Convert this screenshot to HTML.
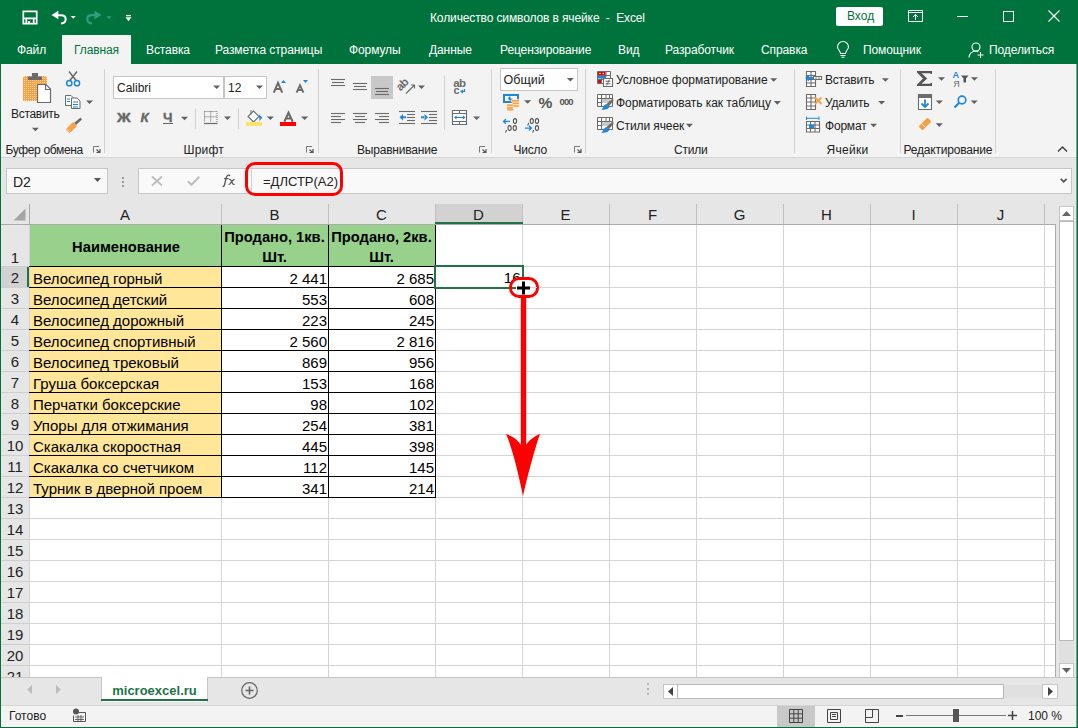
<!DOCTYPE html><html><head><meta charset="utf-8"><style>
html,body{margin:0;padding:0;}
body{width:1078px;height:728px;overflow:hidden;position:relative;background:#00733d;font-family:"Liberation Sans",sans-serif;}
div{box-sizing:border-box;}
svg{position:absolute;overflow:visible;}
</style></head><body>
<div style="position:absolute;left:430px;top:11px;font-size:12px;line-height:14px;color:#fff;font-weight:normal;white-space:nowrap;letter-spacing:-0.12px;">Количество символов в ячейке&nbsp; -&nbsp; Excel</div>
<svg style="left:22px;top:10px;" width="16" height="15" viewBox="0 0 16 15"><path d="M1.3 1.3H14.7V13.7H1.3Z M1.3 8.3H14.7 M4.3 8.3V13.7 M11.7 8.3V13.7" fill="none" stroke="#fff" stroke-width="1.7"/><path d="M6 11H8V13.5H6Z" fill="#fff"/></svg>
<svg style="left:0;top:0" width="140" height="33" viewBox="0 0 140 33"><path d="M56 15.2H61Q65.7 15.2 65.7 19.2Q65.7 23 61 23.5" fill="none" stroke="#fff" stroke-width="2"/><path d="M51.5 15L58.3 10.8V19.3Z" fill="#fff"/><path d="M96.5 15.2H92Q87.3 15.2 87.3 19.2Q87.3 23 92 23.5" fill="none" stroke="#2e9e7e" stroke-width="2.2"/><path d="M101.5 15L94.5 10.8V19.3Z" fill="#2e9e7e"/><path d="M70.8 16H75.8L73.3 18.8Z" fill="#fff"/><path d="M106.5 16.2H111.5L109 19Z" fill="#2e9e7e"/><path d="M126 15.6H131" stroke="#fff" stroke-width="1.3"/><path d="M125.5 17.3H131.5L128.5 21.3Z" fill="#fff"/></svg>
<div style="position:absolute;left:836px;top:7px;width:47px;height:19px;background:#fff;border-radius:2px;"></div>
<div style="position:absolute;left:847px;top:9px;font-size:12px;line-height:14px;color:#00733d;font-weight:normal;white-space:nowrap;">Вход</div>
<svg style="left:908px;top:10px;" width="15" height="12" viewBox="0 0 15 12"><path d="M0.5 0.5H14.5V11.5H0.5Z M0.5 2.5H14.5" fill="none" stroke="#fff" stroke-width="1"/><path d="M7.5 10V4.5 M5 7L7.5 4.5L10 7" fill="none" stroke="#fff" stroke-width="1"/></svg>
<div style="position:absolute;left:957px;top:16px;width:11px;height:1px;background:#fff;"></div>
<div style="position:absolute;left:1003px;top:11px;width:11px;height:11px;border:1px solid #fff;"></div>
<svg style="left:1048px;top:10px;" width="12" height="12" viewBox="0 0 12 12"><path d="M0.5 0.5L11.5 11.5M11.5 0.5L0.5 11.5" stroke="#fff" stroke-width="1.1"/></svg>
<div style="position:absolute;left:62px;top:35px;width:69px;height:30px;background:#f3f3f3;"></div>
<div style="position:absolute;left:17px;top:43px;font-size:12px;line-height:14px;color:#fff;font-weight:normal;white-space:nowrap;letter-spacing:-0.1px;">Файл</div>
<div style="position:absolute;left:74px;top:43px;font-size:12px;line-height:14px;color:#00733d;font-weight:normal;white-space:nowrap;letter-spacing:-0.1px;">Главная</div>
<div style="position:absolute;left:146px;top:43px;font-size:12px;line-height:14px;color:#fff;font-weight:normal;white-space:nowrap;letter-spacing:-0.1px;">Вставка</div>
<div style="position:absolute;left:215px;top:43px;font-size:12px;line-height:14px;color:#fff;font-weight:normal;white-space:nowrap;letter-spacing:-0.1px;">Разметка страницы</div>
<div style="position:absolute;left:349px;top:43px;font-size:12px;line-height:14px;color:#fff;font-weight:normal;white-space:nowrap;letter-spacing:-0.1px;">Формулы</div>
<div style="position:absolute;left:429px;top:43px;font-size:12px;line-height:14px;color:#fff;font-weight:normal;white-space:nowrap;letter-spacing:-0.1px;">Данные</div>
<div style="position:absolute;left:500px;top:43px;font-size:12px;line-height:14px;color:#fff;font-weight:normal;white-space:nowrap;letter-spacing:-0.1px;">Рецензирование</div>
<div style="position:absolute;left:618px;top:43px;font-size:12px;line-height:14px;color:#fff;font-weight:normal;white-space:nowrap;letter-spacing:-0.1px;">Вид</div>
<div style="position:absolute;left:665px;top:43px;font-size:12px;line-height:14px;color:#fff;font-weight:normal;white-space:nowrap;letter-spacing:-0.1px;">Разработчик</div>
<div style="position:absolute;left:761px;top:43px;font-size:12px;line-height:14px;color:#fff;font-weight:normal;white-space:nowrap;letter-spacing:-0.1px;">Справка</div>
<div style="position:absolute;left:863px;top:43px;font-size:12px;line-height:14px;color:#fff;font-weight:normal;white-space:nowrap;letter-spacing:-0.1px;">Помощник</div>
<div style="position:absolute;left:989px;top:43px;font-size:12px;line-height:14px;color:#fff;font-weight:normal;white-space:nowrap;letter-spacing:-0.1px;">Поделиться</div>
<svg style="left:836px;top:42px;" width="14" height="16" viewBox="0 0 14 16"><path d="M4.5 11.5C4.5 9 1.5 7.5 1.5 5A5.5 5.5 0 0 1 12.5 5C12.5 7.5 9.5 9 9.5 11.5Z M4.5 13.5H9.5 M5.5 15.3H8.5" fill="none" stroke="#fff" stroke-width="1.1"/></svg>
<svg style="left:968px;top:42px;" width="17" height="16" viewBox="0 0 17 16"><circle cx="8" cy="5" r="4" fill="none" stroke="#fff" stroke-width="1.1"/><path d="M1 15.5C1.5 11 4 9.2 7.5 9.2C8.5 9.2 9.5 9.4 10.3 9.8" fill="none" stroke="#fff" stroke-width="1.1"/><path d="M12.5 10V16 M9.5 13H15.5" stroke="#fff" stroke-width="1.1"/></svg>
<div style="position:absolute;left:1px;top:64px;width:1076px;height:94px;background:#f3f3f3;border-bottom:1px solid #d4d4d4;"></div>
<div style="position:absolute;left:5.5px;top:143px;font-size:12px;line-height:14px;color:#222;font-weight:normal;white-space:nowrap;letter-spacing:-0.35px;">Буфер обмена</div>
<div style="position:absolute;left:183.5px;top:143px;font-size:12px;line-height:14px;color:#222;font-weight:normal;white-space:nowrap;letter-spacing:0.2px;">Шрифт</div>
<div style="position:absolute;left:357px;top:143px;font-size:12px;line-height:14px;color:#222;font-weight:normal;white-space:nowrap;letter-spacing:-0.2px;">Выравнивание</div>
<div style="position:absolute;left:513.5px;top:143px;font-size:12px;line-height:14px;color:#222;font-weight:normal;white-space:nowrap;letter-spacing:-0.2px;">Число</div>
<div style="position:absolute;left:674px;top:143px;font-size:12px;line-height:14px;color:#222;font-weight:normal;white-space:nowrap;letter-spacing:-0.2px;">Стили</div>
<div style="position:absolute;left:826.5px;top:143px;font-size:12px;line-height:14px;color:#222;font-weight:normal;white-space:nowrap;letter-spacing:0.3px;">Ячейки</div>
<div style="position:absolute;left:903.5px;top:143px;font-size:12px;line-height:14px;color:#222;font-weight:normal;white-space:nowrap;letter-spacing:-0.2px;">Редактирование</div>
<div style="position:absolute;left:104px;top:69px;width:1px;height:84px;background:#d2d2d2;"></div>
<div style="position:absolute;left:318px;top:69px;width:1px;height:84px;background:#d2d2d2;"></div>
<div style="position:absolute;left:491px;top:69px;width:1px;height:84px;background:#d2d2d2;"></div>
<div style="position:absolute;left:585px;top:69px;width:1px;height:84px;background:#d2d2d2;"></div>
<div style="position:absolute;left:794px;top:69px;width:1px;height:84px;background:#d2d2d2;"></div>
<div style="position:absolute;left:900px;top:69px;width:1px;height:84px;background:#d2d2d2;"></div>
<div style="position:absolute;left:995px;top:69px;width:1px;height:84px;background:#d2d2d2;"></div>
<svg style="left:93px;top:146px;" width="8" height="7" viewBox="0 0 8 7"><path d="M0.5 6.5V0.5H6" fill="none" stroke="#777" stroke-width="1"/><path d="M3.5 3.5L6.5 6.5M3.5 6.5H7V3" fill="none" stroke="#555" stroke-width="1.2"/></svg>
<svg style="left:306px;top:146px;" width="8" height="7" viewBox="0 0 8 7"><path d="M0.5 6.5V0.5H6" fill="none" stroke="#777" stroke-width="1"/><path d="M3.5 3.5L6.5 6.5M3.5 6.5H7V3" fill="none" stroke="#555" stroke-width="1.2"/></svg>
<svg style="left:479px;top:146px;" width="8" height="7" viewBox="0 0 8 7"><path d="M0.5 6.5V0.5H6" fill="none" stroke="#777" stroke-width="1"/><path d="M3.5 3.5L6.5 6.5M3.5 6.5H7V3" fill="none" stroke="#555" stroke-width="1.2"/></svg>
<svg style="left:574px;top:146px;" width="8" height="7" viewBox="0 0 8 7"><path d="M0.5 6.5V0.5H6" fill="none" stroke="#777" stroke-width="1"/><path d="M3.5 3.5L6.5 6.5M3.5 6.5H7V3" fill="none" stroke="#555" stroke-width="1.2"/></svg>
<svg style="left:1057px;top:146px;" width="11" height="6" viewBox="0 0 11 6"><path d="M1 5.5L5.5 1L10 5.5" fill="none" stroke="#444" stroke-width="1.5"/></svg>
<div style="position:absolute;left:11px;top:107px;font-size:12px;line-height:14px;color:#222;font-weight:normal;white-space:nowrap;letter-spacing:-0.3px;">Вставить</div>
<div style="position:absolute;left:113px;top:76px;width:111px;height:23px;background:#fff;border:1px solid #c6c6c6;"></div>
<div style="position:absolute;left:224px;top:76px;width:43px;height:23px;background:#fff;border:1px solid #c6c6c6;"></div>
<div style="position:absolute;left:117px;top:81px;font-size:12px;line-height:14px;color:#222;font-weight:normal;white-space:nowrap;">Calibri</div>
<div style="position:absolute;left:228px;top:81px;font-size:12px;line-height:14px;color:#222;font-weight:normal;white-space:nowrap;">12</div>
<div style="position:absolute;left:500px;top:68px;width:78px;height:23px;background:#fff;border:1px solid #c6c6c6;"></div>
<div style="position:absolute;left:503.5px;top:73.3px;font-size:12.5px;line-height:14px;color:#222;font-weight:normal;white-space:nowrap;">Общий</div>
<div style="position:absolute;left:616px;top:73px;font-size:12px;line-height:14px;color:#222;font-weight:normal;white-space:nowrap;letter-spacing:-0.05px;">Условное форматирование</div>
<div style="position:absolute;left:616px;top:96px;font-size:12px;line-height:14px;color:#222;font-weight:normal;white-space:nowrap;letter-spacing:-0.05px;">Форматировать как таблицу</div>
<div style="position:absolute;left:616px;top:119px;font-size:12px;line-height:14px;color:#222;font-weight:normal;white-space:nowrap;letter-spacing:-0.1px;">Стили ячеек</div>
<div style="position:absolute;left:825px;top:73px;font-size:12px;line-height:14px;color:#222;font-weight:normal;white-space:nowrap;letter-spacing:-0.2px;">Вставить</div>
<div style="position:absolute;left:825px;top:96px;font-size:12px;line-height:14px;color:#222;font-weight:normal;white-space:nowrap;letter-spacing:-0.2px;">Удалить</div>
<div style="position:absolute;left:825px;top:119px;font-size:12px;line-height:14px;color:#222;font-weight:normal;white-space:nowrap;letter-spacing:-0.2px;">Формат</div>
<div style="position:absolute;left:116.5px;top:110px;font-size:13.5px;line-height:16px;color:#666;font-weight:normal;white-space:nowrap;-webkit-text-stroke:0.4px #666;transform:scaleX(1.12);transform-origin:0 0;"><b>Ж</b></div>
<div style="position:absolute;left:140.5px;top:110px;font-size:13.5px;line-height:16px;color:#666;font-weight:normal;white-space:nowrap;-webkit-text-stroke:0.3px #666;"><b><i>К</i></b></div>
<div style="position:absolute;left:163px;top:110px;font-size:13.5px;line-height:16px;color:#666;font-weight:normal;white-space:nowrap;-webkit-text-stroke:0.3px #666;"><b>Ч</b></div>
<div style="position:absolute;left:163px;top:123px;width:10px;height:1.2px;background:#666;"></div>
<svg style="left:0;top:64px" width="1078" height="93" viewBox="0 64 1078 93"><defs><pattern id="dp" width="2" height="2" patternUnits="userSpaceOnUse"><rect width="2" height="2" fill="#f7a046"/><rect width="1" height="1" fill="#fdd9a8"/></pattern></defs><path d="M23 78.5Q23 76 25.5 76H44.5Q47 76 47 78.5V101H23Z" fill="url(#dp)"/><path d="M28 76.5H42V80H28Z M32 73H38V77H32Z" fill="#6b6b6b"/><path d="M37.5 84.5H46L50.5 89V102.5H37.5Z" fill="#fff" stroke="#6b6b6b" stroke-width="1.2"/><path d="M45.5 84.5V89.5H50.5" fill="none" stroke="#6b6b6b" stroke-width="1.1"/><path d="M69 71.5L76.5 81 M77 71.5L69.5 81" stroke="#6b6b6b" stroke-width="1.5"/><circle cx="69.3" cy="83.2" r="2.6" fill="none" stroke="#1f87d8" stroke-width="1.5"/><circle cx="77" cy="83.2" r="2.6" fill="none" stroke="#1f87d8" stroke-width="1.5"/><path d="M65.5 95.5H71L73.5 98V105.5H65.5Z" fill="#fff" stroke="#6b6b6b" stroke-width="1"/><path d="M71.5 98H77L80 101V108.5H71.5Z" fill="#fff" stroke="#6b6b6b" stroke-width="1"/><path d="M67 99H70 M67 101.5H70 M73 102H78 M73 104.5H78 M73 107H78" stroke="#1f87d8" stroke-width="1"/><path d="M74 123L80.5 117.5L82 119.5L76 125Z" fill="#6b6b6b"/><path d="M67 128.5L73 122.5L76.5 126L70.5 132Z M66 129.5L70 133" fill="#f7a046" stroke="#f7a046" stroke-width="1"/><path d="M273.8 92.6L278 82.8L282.2 92.6 M275.4 89H280.6" fill="none" stroke="#6b6b6b" stroke-width="2"/><path d="M281 83H286L283.5 80Z" fill="#1f87d8"/><path d="M296.6 92.6L300 85.2L303.4 92.6 M297.8 90H302.2" fill="none" stroke="#6b6b6b" stroke-width="1.9"/><path d="M303 80H308L305.5 83Z" fill="#1f87d8"/><path d="M204.5 111.5H217V122 M204.5 111.5V122 M210.7 111.5V122 M204.5 116.8H217" fill="none" stroke="#6b6b6b" stroke-width="1" stroke-dasharray="1 1"/><path d="M204 123.5H217.5" stroke="#6b6b6b" stroke-width="1.2"/><path d="M253.5 111L259 116.5L253.5 122L248 116.5Z" fill="#fff" stroke="#6b6b6b" stroke-width="1.1"/><path d="M251 110V114.5" stroke="#6b6b6b" stroke-width="1"/><path d="M259 114.5L262.3 117.5L259.5 121Z" fill="#1f87d8"/><rect x="246" y="122" width="16" height="4" fill="#fde36a"/><path d="M284.3 121.8L288.5 112.8L292.7 121.8 M285.7 118.5H291.3" fill="none" stroke="#6b6b6b" stroke-width="2.1"/><rect x="280" y="122" width="16" height="4" fill="#f00"/><path d="M195.5 108.5V129 M238.5 108.5V129 M444.5 75.5V129.5" stroke="#d0d0d0" stroke-width="1"/><path d="M331 79.5H345" stroke="#6b6b6b" stroke-width="1.1"/><path d="M332 82.5H344" stroke="#6b6b6b" stroke-width="1.1"/><path d="M331 85.5H345" stroke="#6b6b6b" stroke-width="1.1"/><path d="M353 83.5H367" stroke="#6b6b6b" stroke-width="1.1"/><path d="M354 86.5H366" stroke="#6b6b6b" stroke-width="1.1"/><path d="M353 89.5H367" stroke="#6b6b6b" stroke-width="1.1"/><rect x="371" y="76" width="22" height="23" fill="#c8c8c8"/><path d="M375 88.5H389" stroke="#6b6b6b" stroke-width="1.1"/><path d="M376 91.5H388" stroke="#6b6b6b" stroke-width="1.1"/><path d="M375 94.5H389" stroke="#6b6b6b" stroke-width="1.1"/><path d="M331 113.5H345" stroke="#6b6b6b" stroke-width="1.1"/><path d="M331 116.5H341" stroke="#6b6b6b" stroke-width="1.1"/><path d="M331 119.5H345" stroke="#6b6b6b" stroke-width="1.1"/><path d="M331 122.5H341" stroke="#6b6b6b" stroke-width="1.1"/><path d="M353 113.5H367" stroke="#6b6b6b" stroke-width="1.1"/><path d="M355 116.5H365" stroke="#6b6b6b" stroke-width="1.1"/><path d="M353 119.5H367" stroke="#6b6b6b" stroke-width="1.1"/><path d="M355 122.5H365" stroke="#6b6b6b" stroke-width="1.1"/><path d="M375 113.5H389" stroke="#6b6b6b" stroke-width="1.1"/><path d="M379 116.5H389" stroke="#6b6b6b" stroke-width="1.1"/><path d="M375 119.5H389" stroke="#6b6b6b" stroke-width="1.1"/><path d="M379 122.5H389" stroke="#6b6b6b" stroke-width="1.1"/><path d="M399 111.5H415" stroke="#6b6b6b" stroke-width="1.1"/><path d="M399 123.5H415" stroke="#6b6b6b" stroke-width="1.1"/><path d="M407 114.5H415" stroke="#6b6b6b" stroke-width="1.1"/><path d="M407 117.5H415" stroke="#6b6b6b" stroke-width="1.1"/><path d="M407 120.5H415" stroke="#6b6b6b" stroke-width="1.1"/><path d="M399.5 117.2L403 114V120.5Z M402 116.2H406V118.2H402Z" fill="#1f87d8"/><path d="M421 111.5H437" stroke="#6b6b6b" stroke-width="1.1"/><path d="M421 123.5H437" stroke="#6b6b6b" stroke-width="1.1"/><path d="M429 114.5H437" stroke="#6b6b6b" stroke-width="1.1"/><path d="M429 117.5H437" stroke="#6b6b6b" stroke-width="1.1"/><path d="M429 120.5H437" stroke="#6b6b6b" stroke-width="1.1"/><path d="M428 117.2L424.5 114V120.5Z M421 116.2H425V118.2H421Z" fill="#1f87d8"/><text x="0" y="0" transform="translate(400.5 91.5) rotate(-45)" font-size="11.5" font-weight="bold" font-family="Liberation Sans" fill="#6b6b6b" letter-spacing="-0.6">ab</text><path d="M406 93.5L414.5 85 M411 85H414.5V88.5" fill="none" stroke="#6b6b6b" stroke-width="1.1"/><text x="453.3" y="86.8" font-size="11.5" font-family="Liberation Sans" fill="#6b6b6b" font-weight="bold" letter-spacing="-0.7">ab</text><text x="453.5" y="94.3" font-size="11" font-family="Liberation Sans" font-weight="bold" fill="#6b6b6b">c</text><path d="M464.5 89V91.5H461.5 M463 90L461 91.5L463 93" fill="none" stroke="#1f87d8" stroke-width="1.2"/><path d="M452.5 110.5H466.5V124.5H452.5Z M452.5 113.5H466.5 M452.5 121.5H466.5 M459.5 110.5V113.5 M459.5 121.5V124.5" fill="#fff" stroke="#6b6b6b" stroke-width="1.1"/><path d="M455 117.5H464.5" stroke="#1f87d8" stroke-width="1.1"/><path d="M454 117.5L456.5 115.5V119.5Z M465.5 117.5L463 115.5V119.5Z" fill="#1f87d8"/><path d="M503 94H519V103H503Z" fill="#1f87d8"/><path d="M505 96H517V101H505Z" fill="#fff"/><circle cx="510.5" cy="98.5" r="2.2" fill="#1f87d8"/><path d="M510.5 98.5H513V96H510.5Z" fill="#fff"/><rect x="511" y="99.5" width="8.5" height="2.6" rx="1.2" fill="#f7a046" stroke="#fff" stroke-width="0.6"/><rect x="512" y="102.3" width="7.5" height="2.4" rx="1.2" fill="#f7a046" stroke="#fff" stroke-width="0.6"/><rect x="512" y="104.8" width="7.5" height="2.4" rx="1.2" fill="#f7a046" stroke="#fff" stroke-width="0.6"/><rect x="506.5" y="104" width="7" height="2.6" rx="1.2" fill="#f7a046" stroke="#fff" stroke-width="0.6"/><rect x="506.5" y="106.6" width="7" height="2.6" rx="1.2" fill="#f7a046" stroke="#fff" stroke-width="0.6"/><rect x="507" y="109" width="6.5" height="1.6" rx="0.8" fill="#f7a046"/><text x="538.5" y="108" font-size="15.5" font-family="Liberation Sans" fill="#555" font-weight="bold">%</text><text x="559.5" y="105" font-size="9.5" font-family="Liberation Sans" fill="#555" font-weight="bold" letter-spacing="-0.9">000</text><path d="M503.5 121.4H510 M506 119L503.5 121.4L506 123.8" fill="none" stroke="#1f87d8" stroke-width="1.3"/><ellipse cx="515" cy="121" rx="1.6" ry="2.4" fill="none" stroke="#555" stroke-width="1.1"/><ellipse cx="509.6" cy="128" rx="1.6" ry="2.4" fill="none" stroke="#555" stroke-width="1.1"/><ellipse cx="514.8" cy="128" rx="1.6" ry="2.4" fill="none" stroke="#555" stroke-width="1.1"/><path d="M506.5 130L505.5 132.5" stroke="#555" stroke-width="1.1"/><ellipse cx="531.8" cy="121" rx="1.6" ry="2.4" fill="none" stroke="#555" stroke-width="1.1"/><ellipse cx="537" cy="121" rx="1.6" ry="2.4" fill="none" stroke="#555" stroke-width="1.1"/><path d="M528.7 123L527.7 125.5" stroke="#555" stroke-width="1.1"/><ellipse cx="537" cy="128" rx="1.6" ry="2.4" fill="none" stroke="#555" stroke-width="1.1"/><path d="M533.7 130L532.7 132.5" stroke="#555" stroke-width="1.1"/><path d="M525 128.1H531.5 M529 125.7L531.5 128.1L529 130.5" fill="none" stroke="#1f87d8" stroke-width="1.3"/><path d="M597.5 71.5H610.5V83.5H597.5Z M597.5 75.5H610.5 M597.5 79.5H603 M601.5 71.5V83.5 M606 71.5V77" fill="#fff" stroke="#6b6b6b" stroke-width="1"/><rect x="598" y="72" width="7.5" height="3" fill="#e00"/><circle cx="600" cy="73.5" r="0.8" fill="#fff"/><circle cx="603.3" cy="73.5" r="0.8" fill="#fff"/><rect x="598" y="76" width="8" height="2.5" fill="#1f87d8"/><rect x="598" y="80" width="3" height="3" fill="#e00"/><path d="M603.5 78.5H612.5V86.5H603.5Z" fill="#fff" stroke="#6b6b6b" stroke-width="1.1"/><path d="M605.5 81.2H610.5 M605.5 83.8H610.5 M609.3 79.6L606.7 85.4" stroke="#6b6b6b" stroke-width="1"/><path d="M597.5 94.5H612.5V106.5H597.5Z M597.5 98.5H612.5 M597.5 102.5H606 M601.5 94.5V106.5 M606 94.5V103 M609.5 94.5V98" fill="#fff" stroke="#6b6b6b" stroke-width="1"/><rect x="602" y="99" width="8" height="4" fill="#c8c8c8"/><path d="M613 98L606 104.5L608.5 106.5L613.5 101Z" fill="#6b6b6b"/><path d="M606 104L609.5 107Q608 109.5 604 109.8H601.5Q603 108 603.5 106Z" fill="#1f87d8"/><path d="M597.5 117.5H612.5V129.5H597.5Z M597.5 121.5H612.5 M597.5 125.5H606 M601.5 117.5V129.5 M606 117.5V126 M609.5 117.5V121" fill="#fff" stroke="#6b6b6b" stroke-width="1"/><rect x="602" y="122" width="8" height="4" fill="#c8c8c8"/><path d="M613 121L606 127.5L608.5 129.5L613.5 124Z" fill="#6b6b6b"/><path d="M606 127L609.5 130Q608 132.5 604 132.8H601.5Q603 131 603.5 129Z" fill="#1f87d8"/><path d="M806.5 71.5H815.5V86.5H806.5Z M806.5 75.5H815.5 M806.5 79.5H815.5 M806.5 83H815.5 M811 71.5V86.5" fill="#fff" stroke="#6b6b6b" stroke-width="1.1"/><path d="M813.5 76.5H821.5V79.5H813.5Z" fill="#fff" stroke="#6b6b6b" stroke-width="1.1"/><rect x="815" y="77.5" width="2" height="1.5" fill="#aaa"/><rect x="818" y="77.5" width="2" height="1.5" fill="#aaa"/><path d="M806.5 78H813 M809 75.5L806.5 78L809 80.5" fill="none" stroke="#1f87d8" stroke-width="1.8"/><path d="M806.5 94.5H815.5V109.5H806.5Z M806.5 98H815.5 M806.5 102H815.5 M806.5 106H815.5 M811 94.5V109.5" fill="#fff" stroke="#6b6b6b" stroke-width="1.1"/><path d="M815 97.5L821.5 104 M821.5 97.5L815 104" stroke="#f7a046" stroke-width="1.8"/><path d="M806.5 121.5H819.5V132H806.5Z M806.5 125H819.5 M806.5 128.5H819.5 M810.5 121.5V132 M815 121.5V132" fill="#fff" stroke="#6b6b6b" stroke-width="1.1"/><rect x="809" y="124.5" width="5" height="3.5" fill="#1f87d8"/><path d="M806.5 116.5V120 M819 116.5V120 M807 118.3H818.5" stroke="#1f87d8" stroke-width="1"/><path d="M917 71H932V74H930.5V73.2H921.5L927.2 78.5L921.5 83.8H930.5V83H932V86H917V84.5L923 78.5L917 72.5Z" fill="#555"/><text x="952.6" y="77.8" font-size="9.2" font-weight="bold" font-family="Liberation Sans" fill="#1f87d8">A</text><text x="953.3" y="86.8" font-size="9" font-family="Liberation Sans" fill="#6b6b6b">Я</text><path d="M961 75.5H968.5L966 78.5V82.5H963.5V78.5Z" fill="#555"/><path d="M918.5 94.5H931.5V109.5H918.5Z" fill="#fff" stroke="#6b6b6b" stroke-width="1.1"/><rect x="918" y="94" width="14" height="4" fill="#6b6b6b"/><path d="M925 99.5V107 M921.5 103.5L925 107L928.5 103.5" fill="none" stroke="#1f87d8" stroke-width="1.8"/><circle cx="962" cy="100" r="3.8" fill="none" stroke="#1f87d8" stroke-width="1.7"/><path d="M959.2 102.8L954.5 107.5" stroke="#1f87d8" stroke-width="2.2"/><path d="M919.5 125.5L926.5 118.5Q927.5 117.5 928.5 118.5L930.5 120.5Q931.5 121.5 930.5 122.5L923.5 129.5Q922.5 130.5 921.5 129.5L919.5 127.5Q918.5 126.5 919.5 125.5Z" fill="#f7a046"/><path d="M921.5 123.5L925 127" stroke="#f3f3f3" stroke-width="0.9"/><path d="M31.9 127.7H38.9L35.4 131.3Z" fill="#606060"/><path d="M86.0 100.4H93.0L89.5 104.0Z" fill="#606060"/><path d="M181.0 116.7H188.0L184.5 120.3Z" fill="#606060"/><path d="M213.1 85.5H220.1L216.6 89.1Z" fill="#606060"/><path d="M256.0 85.5H263.0L259.5 89.1Z" fill="#606060"/><path d="M224.0 116.4H231.0L227.5 120.0Z" fill="#606060"/><path d="M266.9 116.4H273.9L270.4 120.0Z" fill="#606060"/><path d="M301.1 116.4H308.1L304.6 120.0Z" fill="#606060"/><path d="M418.0 85.5H425.0L421.5 89.1Z" fill="#606060"/><path d="M473.1 116.4H480.1L476.6 120.0Z" fill="#606060"/><path d="M566.8 77.9H573.8L570.3 81.5Z" fill="#606060"/><path d="M524.1 100.2H531.1L527.6 103.8Z" fill="#606060"/><path d="M770.2 78.2H777.2L773.7 81.8Z" fill="#606060"/><path d="M773.8 101.10000000000001H780.8L777.3 104.7Z" fill="#606060"/><path d="M685.9 123.8H692.9L689.4 127.39999999999999Z" fill="#606060"/><path d="M881.9 78.2H888.9L885.4 81.8Z" fill="#606060"/><path d="M878.1 100.9H885.1L881.6 104.5Z" fill="#606060"/><path d="M870.1 123.7H877.1L873.6 127.3Z" fill="#606060"/><path d="M938.0 77.2H945.0L941.5 80.8Z" fill="#606060"/><path d="M970.9 77.2H977.9L974.4 80.8Z" fill="#606060"/><path d="M935.8 100.5H942.8L939.3 104.1Z" fill="#606060"/><path d="M970.7 100.5H977.7L974.2 104.1Z" fill="#606060"/><path d="M935.8 123.3H942.8L939.3 126.89999999999999Z" fill="#606060"/></svg>
<div style="position:absolute;left:1px;top:158px;width:1076px;height:46px;background:#e6e6e6;"></div>
<div style="position:absolute;left:6px;top:168px;width:102px;height:26px;background:#f9f9f9;border:1px solid #c6c6c6;"></div>
<div style="position:absolute;left:13px;top:174px;font-size:14px;line-height:16px;color:#222;font-weight:normal;white-space:nowrap;">D2</div>
<svg style="left:94.0px;top:178.0px;" width="7" height="4" viewBox="0 0 7 4"><path d="M0 0H7L3.5 4Z" fill="#555"/></svg>
<div style="position:absolute;left:122px;top:177px;width:2px;height:2px;background:#9a9a9a;"></div>
<div style="position:absolute;left:122px;top:181px;width:2px;height:2px;background:#9a9a9a;"></div>
<div style="position:absolute;left:122px;top:185px;width:2px;height:2px;background:#9a9a9a;"></div>
<div style="position:absolute;left:138px;top:168px;width:934px;height:26px;background:#f9f9f9;border:1px solid #c6c6c6;"></div>
<div style="position:absolute;left:251px;top:168px;width:1px;height:26px;background:#d0d0d0;"></div>
<svg style="left:151px;top:176px;" width="12" height="10" viewBox="0 0 12 10"><path d="M1 0.5L11 9.5M11 0.5L1 9.5" stroke="#bdbdbd" stroke-width="1.8"/></svg>
<svg style="left:187px;top:176px;" width="13" height="10" viewBox="0 0 13 10"><path d="M0.8 5.3L4.5 8.8L12.3 0.8" fill="none" stroke="#bdbdbd" stroke-width="2"/></svg>
<svg style="left:215px;top:170px" width="30" height="20" viewBox="215 170 30 20"><path d="M230 175.8Q229.5 175 228.3 175.2Q226.8 175.5 226.3 177.5L224.6 184.5Q224 186.8 222.6 186.6" fill="none" stroke="#555" stroke-width="1.3"/><path d="M224 178.6H228.6" stroke="#555" stroke-width="1.1"/><path d="M229 179.3Q230.3 179 230.9 180.2L232.6 183.6Q233.2 184.8 234.6 184.3 M234.6 179.6Q233.8 179.3 232.7 180.5L230.6 183.1Q229.6 184.6 228.6 184.2" fill="none" stroke="#555" stroke-width="1.2"/></svg>
<div style="position:absolute;left:263px;top:174px;font-size:13px;line-height:15px;color:#222;font-weight:normal;white-space:nowrap;">=ДЛСТР(А2)</div>
<svg style="left:1060px;top:178px;" width="8" height="5" viewBox="0 0 8 5"><path d="M0.8 0.8L3.7 3.8L6.6 0.8" fill="none" stroke="#555" stroke-width="1.8"/></svg>
<div style="position:absolute;left:245px;top:162px;width:98px;height:34px;border:3px solid #f00;border-radius:10px;"></div>
<div style="position:absolute;left:1px;top:204px;width:1055px;height:21px;background:#e6e6e6;border-bottom:1px solid #ababab;"></div>
<div style="position:absolute;left:1px;top:225px;width:1055px;height:452px;background:#fff;"></div>
<div style="position:absolute;left:1px;top:225px;width:29px;height:452px;background:#e6e6e6;border-right:1px solid #ababab;"></div>
<svg style="left:13px;top:208px;" width="13" height="13" viewBox="0 0 13 13"><path d="M0.5 12.5L12.5 0.5V12.5Z" fill="#a5a5a5"/></svg>
<div style="position:absolute;left:29px;top:204px;width:1px;height:21px;background:#ababab;"></div>
<div style="position:absolute;left:29px;top:225px;width:1px;height:452px;background:#d4d4d4;"></div>
<div style="position:absolute;left:221px;top:225px;width:1px;height:452px;background:#d4d4d4;"></div>
<div style="position:absolute;left:221px;top:204px;width:1px;height:20px;background:#c0c0c0;"></div>
<div style="position:absolute;left:328px;top:225px;width:1px;height:452px;background:#d4d4d4;"></div>
<div style="position:absolute;left:328px;top:204px;width:1px;height:20px;background:#c0c0c0;"></div>
<div style="position:absolute;left:435px;top:225px;width:1px;height:452px;background:#d4d4d4;"></div>
<div style="position:absolute;left:435px;top:204px;width:1px;height:20px;background:#c0c0c0;"></div>
<div style="position:absolute;left:522px;top:225px;width:1px;height:452px;background:#d4d4d4;"></div>
<div style="position:absolute;left:522px;top:204px;width:1px;height:20px;background:#c0c0c0;"></div>
<div style="position:absolute;left:609px;top:225px;width:1px;height:452px;background:#d4d4d4;"></div>
<div style="position:absolute;left:609px;top:204px;width:1px;height:20px;background:#c0c0c0;"></div>
<div style="position:absolute;left:696px;top:225px;width:1px;height:452px;background:#d4d4d4;"></div>
<div style="position:absolute;left:696px;top:204px;width:1px;height:20px;background:#c0c0c0;"></div>
<div style="position:absolute;left:783px;top:225px;width:1px;height:452px;background:#d4d4d4;"></div>
<div style="position:absolute;left:783px;top:204px;width:1px;height:20px;background:#c0c0c0;"></div>
<div style="position:absolute;left:870px;top:225px;width:1px;height:452px;background:#d4d4d4;"></div>
<div style="position:absolute;left:870px;top:204px;width:1px;height:20px;background:#c0c0c0;"></div>
<div style="position:absolute;left:957px;top:225px;width:1px;height:452px;background:#d4d4d4;"></div>
<div style="position:absolute;left:957px;top:204px;width:1px;height:20px;background:#c0c0c0;"></div>
<div style="position:absolute;left:1044px;top:225px;width:1px;height:452px;background:#d4d4d4;"></div>
<div style="position:absolute;left:1044px;top:204px;width:1px;height:20px;background:#c0c0c0;"></div>
<div style="position:absolute;left:30px;top:266px;width:1026px;height:1px;background:#d4d4d4;"></div>
<div style="position:absolute;left:30px;top:287px;width:1026px;height:1px;background:#d4d4d4;"></div>
<div style="position:absolute;left:30px;top:308px;width:1026px;height:1px;background:#d4d4d4;"></div>
<div style="position:absolute;left:30px;top:329px;width:1026px;height:1px;background:#d4d4d4;"></div>
<div style="position:absolute;left:30px;top:350px;width:1026px;height:1px;background:#d4d4d4;"></div>
<div style="position:absolute;left:30px;top:371px;width:1026px;height:1px;background:#d4d4d4;"></div>
<div style="position:absolute;left:30px;top:392px;width:1026px;height:1px;background:#d4d4d4;"></div>
<div style="position:absolute;left:30px;top:413px;width:1026px;height:1px;background:#d4d4d4;"></div>
<div style="position:absolute;left:30px;top:434px;width:1026px;height:1px;background:#d4d4d4;"></div>
<div style="position:absolute;left:30px;top:455px;width:1026px;height:1px;background:#d4d4d4;"></div>
<div style="position:absolute;left:30px;top:476px;width:1026px;height:1px;background:#d4d4d4;"></div>
<div style="position:absolute;left:30px;top:497px;width:1026px;height:1px;background:#d4d4d4;"></div>
<div style="position:absolute;left:30px;top:518px;width:1026px;height:1px;background:#d4d4d4;"></div>
<div style="position:absolute;left:30px;top:539px;width:1026px;height:1px;background:#d4d4d4;"></div>
<div style="position:absolute;left:30px;top:560px;width:1026px;height:1px;background:#d4d4d4;"></div>
<div style="position:absolute;left:30px;top:581px;width:1026px;height:1px;background:#d4d4d4;"></div>
<div style="position:absolute;left:30px;top:602px;width:1026px;height:1px;background:#d4d4d4;"></div>
<div style="position:absolute;left:30px;top:623px;width:1026px;height:1px;background:#d4d4d4;"></div>
<div style="position:absolute;left:30px;top:644px;width:1026px;height:1px;background:#d4d4d4;"></div>
<div style="position:absolute;left:30px;top:665px;width:1026px;height:1px;background:#d4d4d4;"></div>
<div style="position:absolute;left:1055px;top:225px;width:1px;height:452px;background:#ababab;"></div>
<div style="position:absolute;left:1px;top:267px;width:28px;height:20px;background:#d2d2d2;"></div>
<div style="position:absolute;left:27px;top:266px;width:2px;height:22px;background:#217346;"></div>
<div style="position:absolute;left:1px;top:266px;width:28px;height:1px;background:#cfcfcf;"></div>
<div style="position:absolute;left:1px;top:249px;font-size:15px;line-height:17px;color:#222;font-weight:normal;white-space:nowrap;width:28px;text-align:center;">1</div>
<div style="position:absolute;left:1px;top:287px;width:28px;height:1px;background:#cfcfcf;"></div>
<div style="position:absolute;left:1px;top:269px;font-size:15px;line-height:17px;color:#222;font-weight:normal;white-space:nowrap;width:28px;text-align:center;">2</div>
<div style="position:absolute;left:1px;top:308px;width:28px;height:1px;background:#cfcfcf;"></div>
<div style="position:absolute;left:1px;top:290px;font-size:15px;line-height:17px;color:#222;font-weight:normal;white-space:nowrap;width:28px;text-align:center;">3</div>
<div style="position:absolute;left:1px;top:329px;width:28px;height:1px;background:#cfcfcf;"></div>
<div style="position:absolute;left:1px;top:311px;font-size:15px;line-height:17px;color:#222;font-weight:normal;white-space:nowrap;width:28px;text-align:center;">4</div>
<div style="position:absolute;left:1px;top:350px;width:28px;height:1px;background:#cfcfcf;"></div>
<div style="position:absolute;left:1px;top:332px;font-size:15px;line-height:17px;color:#222;font-weight:normal;white-space:nowrap;width:28px;text-align:center;">5</div>
<div style="position:absolute;left:1px;top:371px;width:28px;height:1px;background:#cfcfcf;"></div>
<div style="position:absolute;left:1px;top:353px;font-size:15px;line-height:17px;color:#222;font-weight:normal;white-space:nowrap;width:28px;text-align:center;">6</div>
<div style="position:absolute;left:1px;top:392px;width:28px;height:1px;background:#cfcfcf;"></div>
<div style="position:absolute;left:1px;top:374px;font-size:15px;line-height:17px;color:#222;font-weight:normal;white-space:nowrap;width:28px;text-align:center;">7</div>
<div style="position:absolute;left:1px;top:413px;width:28px;height:1px;background:#cfcfcf;"></div>
<div style="position:absolute;left:1px;top:395px;font-size:15px;line-height:17px;color:#222;font-weight:normal;white-space:nowrap;width:28px;text-align:center;">8</div>
<div style="position:absolute;left:1px;top:434px;width:28px;height:1px;background:#cfcfcf;"></div>
<div style="position:absolute;left:1px;top:416px;font-size:15px;line-height:17px;color:#222;font-weight:normal;white-space:nowrap;width:28px;text-align:center;">9</div>
<div style="position:absolute;left:1px;top:455px;width:28px;height:1px;background:#cfcfcf;"></div>
<div style="position:absolute;left:1px;top:437px;font-size:15px;line-height:17px;color:#222;font-weight:normal;white-space:nowrap;width:28px;text-align:center;">10</div>
<div style="position:absolute;left:1px;top:476px;width:28px;height:1px;background:#cfcfcf;"></div>
<div style="position:absolute;left:1px;top:458px;font-size:15px;line-height:17px;color:#222;font-weight:normal;white-space:nowrap;width:28px;text-align:center;">11</div>
<div style="position:absolute;left:1px;top:497px;width:28px;height:1px;background:#cfcfcf;"></div>
<div style="position:absolute;left:1px;top:479px;font-size:15px;line-height:17px;color:#222;font-weight:normal;white-space:nowrap;width:28px;text-align:center;">12</div>
<div style="position:absolute;left:1px;top:518px;width:28px;height:1px;background:#cfcfcf;"></div>
<div style="position:absolute;left:1px;top:500px;font-size:15px;line-height:17px;color:#222;font-weight:normal;white-space:nowrap;width:28px;text-align:center;">13</div>
<div style="position:absolute;left:1px;top:539px;width:28px;height:1px;background:#cfcfcf;"></div>
<div style="position:absolute;left:1px;top:521px;font-size:15px;line-height:17px;color:#222;font-weight:normal;white-space:nowrap;width:28px;text-align:center;">14</div>
<div style="position:absolute;left:1px;top:560px;width:28px;height:1px;background:#cfcfcf;"></div>
<div style="position:absolute;left:1px;top:542px;font-size:15px;line-height:17px;color:#222;font-weight:normal;white-space:nowrap;width:28px;text-align:center;">15</div>
<div style="position:absolute;left:1px;top:581px;width:28px;height:1px;background:#cfcfcf;"></div>
<div style="position:absolute;left:1px;top:563px;font-size:15px;line-height:17px;color:#222;font-weight:normal;white-space:nowrap;width:28px;text-align:center;">16</div>
<div style="position:absolute;left:1px;top:602px;width:28px;height:1px;background:#cfcfcf;"></div>
<div style="position:absolute;left:1px;top:584px;font-size:15px;line-height:17px;color:#222;font-weight:normal;white-space:nowrap;width:28px;text-align:center;">17</div>
<div style="position:absolute;left:1px;top:623px;width:28px;height:1px;background:#cfcfcf;"></div>
<div style="position:absolute;left:1px;top:605px;font-size:15px;line-height:17px;color:#222;font-weight:normal;white-space:nowrap;width:28px;text-align:center;">18</div>
<div style="position:absolute;left:1px;top:644px;width:28px;height:1px;background:#cfcfcf;"></div>
<div style="position:absolute;left:1px;top:626px;font-size:15px;line-height:17px;color:#222;font-weight:normal;white-space:nowrap;width:28px;text-align:center;">19</div>
<div style="position:absolute;left:1px;top:665px;width:28px;height:1px;background:#cfcfcf;"></div>
<div style="position:absolute;left:1px;top:647px;font-size:15px;line-height:17px;color:#222;font-weight:normal;white-space:nowrap;width:28px;text-align:center;">20</div>
<div style="position:absolute;left:1px;top:686px;width:28px;height:1px;background:#cfcfcf;"></div>
<div style="position:absolute;left:1px;top:668px;font-size:15px;line-height:17px;color:#222;font-weight:normal;white-space:nowrap;width:28px;text-align:center;">21</div>
<div style="position:absolute;left:436px;top:204px;width:86px;height:20px;background:#d2d2d2;"></div>
<div style="position:absolute;left:435px;top:222px;width:88px;height:2px;background:#217346;"></div>
<div style="position:absolute;left:29px;top:206px;font-size:15px;line-height:17px;color:#222;font-weight:normal;white-space:nowrap;width:192px;text-align:center;">A</div>
<div style="position:absolute;left:221px;top:206px;font-size:15px;line-height:17px;color:#222;font-weight:normal;white-space:nowrap;width:107px;text-align:center;">B</div>
<div style="position:absolute;left:328px;top:206px;font-size:15px;line-height:17px;color:#222;font-weight:normal;white-space:nowrap;width:107px;text-align:center;">C</div>
<div style="position:absolute;left:435px;top:206px;font-size:15px;line-height:17px;color:#222;font-weight:normal;white-space:nowrap;width:87px;text-align:center;">D</div>
<div style="position:absolute;left:522px;top:206px;font-size:15px;line-height:17px;color:#222;font-weight:normal;white-space:nowrap;width:87px;text-align:center;">E</div>
<div style="position:absolute;left:609px;top:206px;font-size:15px;line-height:17px;color:#222;font-weight:normal;white-space:nowrap;width:87px;text-align:center;">F</div>
<div style="position:absolute;left:696px;top:206px;font-size:15px;line-height:17px;color:#222;font-weight:normal;white-space:nowrap;width:87px;text-align:center;">G</div>
<div style="position:absolute;left:783px;top:206px;font-size:15px;line-height:17px;color:#222;font-weight:normal;white-space:nowrap;width:87px;text-align:center;">H</div>
<div style="position:absolute;left:870px;top:206px;font-size:15px;line-height:17px;color:#222;font-weight:normal;white-space:nowrap;width:87px;text-align:center;">I</div>
<div style="position:absolute;left:957px;top:206px;font-size:15px;line-height:17px;color:#222;font-weight:normal;white-space:nowrap;width:87px;text-align:center;">J</div>
<div style="position:absolute;left:30px;top:225px;width:405px;height:41px;background:#97d18b;"></div>
<div style="position:absolute;left:30px;top:267px;width:191px;height:231px;background:#ffe699;"></div>
<div style="position:absolute;left:221px;top:225px;width:1px;height:273px;background:#000;"></div>
<div style="position:absolute;left:328px;top:225px;width:1px;height:273px;background:#000;"></div>
<div style="position:absolute;left:435px;top:225px;width:1px;height:273px;background:#000;"></div>
<div style="position:absolute;left:29px;top:266px;width:406px;height:1px;background:#000;"></div>
<div style="position:absolute;left:29px;top:287px;width:406px;height:1px;background:#000;"></div>
<div style="position:absolute;left:29px;top:308px;width:406px;height:1px;background:#000;"></div>
<div style="position:absolute;left:29px;top:329px;width:406px;height:1px;background:#000;"></div>
<div style="position:absolute;left:29px;top:350px;width:406px;height:1px;background:#000;"></div>
<div style="position:absolute;left:29px;top:371px;width:406px;height:1px;background:#000;"></div>
<div style="position:absolute;left:29px;top:392px;width:406px;height:1px;background:#000;"></div>
<div style="position:absolute;left:29px;top:413px;width:406px;height:1px;background:#000;"></div>
<div style="position:absolute;left:29px;top:434px;width:406px;height:1px;background:#000;"></div>
<div style="position:absolute;left:29px;top:455px;width:406px;height:1px;background:#000;"></div>
<div style="position:absolute;left:29px;top:476px;width:406px;height:1px;background:#000;"></div>
<div style="position:absolute;left:29px;top:497px;width:406px;height:1px;background:#000;"></div>
<div style="position:absolute;left:33px;top:270px;font-size:15px;line-height:17px;color:#000;font-weight:normal;white-space:nowrap;">Велосипед горный</div>
<div style="position:absolute;left:221px;top:270px;font-size:15px;line-height:17px;color:#000;font-weight:normal;white-space:nowrap;width:106px;text-align:right;">2 441</div>
<div style="position:absolute;left:328px;top:270px;font-size:15px;line-height:17px;color:#000;font-weight:normal;white-space:nowrap;width:106px;text-align:right;">2 685</div>
<div style="position:absolute;left:33px;top:291px;font-size:15px;line-height:17px;color:#000;font-weight:normal;white-space:nowrap;">Велосипед детский</div>
<div style="position:absolute;left:221px;top:291px;font-size:15px;line-height:17px;color:#000;font-weight:normal;white-space:nowrap;width:106px;text-align:right;">553</div>
<div style="position:absolute;left:328px;top:291px;font-size:15px;line-height:17px;color:#000;font-weight:normal;white-space:nowrap;width:106px;text-align:right;">608</div>
<div style="position:absolute;left:33px;top:312px;font-size:15px;line-height:17px;color:#000;font-weight:normal;white-space:nowrap;">Велосипед дорожный</div>
<div style="position:absolute;left:221px;top:312px;font-size:15px;line-height:17px;color:#000;font-weight:normal;white-space:nowrap;width:106px;text-align:right;">223</div>
<div style="position:absolute;left:328px;top:312px;font-size:15px;line-height:17px;color:#000;font-weight:normal;white-space:nowrap;width:106px;text-align:right;">245</div>
<div style="position:absolute;left:33px;top:333px;font-size:15px;line-height:17px;color:#000;font-weight:normal;white-space:nowrap;">Велосипед спортивный</div>
<div style="position:absolute;left:221px;top:333px;font-size:15px;line-height:17px;color:#000;font-weight:normal;white-space:nowrap;width:106px;text-align:right;">2 560</div>
<div style="position:absolute;left:328px;top:333px;font-size:15px;line-height:17px;color:#000;font-weight:normal;white-space:nowrap;width:106px;text-align:right;">2 816</div>
<div style="position:absolute;left:33px;top:354px;font-size:15px;line-height:17px;color:#000;font-weight:normal;white-space:nowrap;">Велосипед трековый</div>
<div style="position:absolute;left:221px;top:354px;font-size:15px;line-height:17px;color:#000;font-weight:normal;white-space:nowrap;width:106px;text-align:right;">869</div>
<div style="position:absolute;left:328px;top:354px;font-size:15px;line-height:17px;color:#000;font-weight:normal;white-space:nowrap;width:106px;text-align:right;">956</div>
<div style="position:absolute;left:33px;top:375px;font-size:15px;line-height:17px;color:#000;font-weight:normal;white-space:nowrap;">Груша боксерская</div>
<div style="position:absolute;left:221px;top:375px;font-size:15px;line-height:17px;color:#000;font-weight:normal;white-space:nowrap;width:106px;text-align:right;">153</div>
<div style="position:absolute;left:328px;top:375px;font-size:15px;line-height:17px;color:#000;font-weight:normal;white-space:nowrap;width:106px;text-align:right;">168</div>
<div style="position:absolute;left:33px;top:396px;font-size:15px;line-height:17px;color:#000;font-weight:normal;white-space:nowrap;">Перчатки боксерские</div>
<div style="position:absolute;left:221px;top:396px;font-size:15px;line-height:17px;color:#000;font-weight:normal;white-space:nowrap;width:106px;text-align:right;">98</div>
<div style="position:absolute;left:328px;top:396px;font-size:15px;line-height:17px;color:#000;font-weight:normal;white-space:nowrap;width:106px;text-align:right;">102</div>
<div style="position:absolute;left:33px;top:417px;font-size:15px;line-height:17px;color:#000;font-weight:normal;white-space:nowrap;">Упоры для отжимания</div>
<div style="position:absolute;left:221px;top:417px;font-size:15px;line-height:17px;color:#000;font-weight:normal;white-space:nowrap;width:106px;text-align:right;">254</div>
<div style="position:absolute;left:328px;top:417px;font-size:15px;line-height:17px;color:#000;font-weight:normal;white-space:nowrap;width:106px;text-align:right;">381</div>
<div style="position:absolute;left:33px;top:438px;font-size:15px;line-height:17px;color:#000;font-weight:normal;white-space:nowrap;">Скакалка скоростная</div>
<div style="position:absolute;left:221px;top:438px;font-size:15px;line-height:17px;color:#000;font-weight:normal;white-space:nowrap;width:106px;text-align:right;">445</div>
<div style="position:absolute;left:328px;top:438px;font-size:15px;line-height:17px;color:#000;font-weight:normal;white-space:nowrap;width:106px;text-align:right;">398</div>
<div style="position:absolute;left:33px;top:459px;font-size:15px;line-height:17px;color:#000;font-weight:normal;white-space:nowrap;">Скакалка со счетчиком</div>
<div style="position:absolute;left:221px;top:459px;font-size:15px;line-height:17px;color:#000;font-weight:normal;white-space:nowrap;width:106px;text-align:right;">112</div>
<div style="position:absolute;left:328px;top:459px;font-size:15px;line-height:17px;color:#000;font-weight:normal;white-space:nowrap;width:106px;text-align:right;">145</div>
<div style="position:absolute;left:33px;top:480px;font-size:15px;line-height:17px;color:#000;font-weight:normal;white-space:nowrap;">Турник в дверной проем</div>
<div style="position:absolute;left:221px;top:480px;font-size:15px;line-height:17px;color:#000;font-weight:normal;white-space:nowrap;width:106px;text-align:right;">341</div>
<div style="position:absolute;left:328px;top:480px;font-size:15px;line-height:17px;color:#000;font-weight:normal;white-space:nowrap;width:106px;text-align:right;">214</div>
<div style="position:absolute;left:29px;top:239px;font-size:14.7px;line-height:17px;color:#000;font-weight:bold;white-space:nowrap;width:194px;text-align:center;">Наименование</div>
<div style="position:absolute;left:221px;top:229px;font-size:14.7px;line-height:17px;color:#000;font-weight:bold;white-space:nowrap;width:107px;text-align:center;">Продано, 1кв.</div>
<div style="position:absolute;left:221px;top:249px;font-size:14.7px;line-height:17px;color:#000;font-weight:bold;white-space:nowrap;width:107px;text-align:center;">Шт.</div>
<div style="position:absolute;left:328px;top:229px;font-size:14.7px;line-height:17px;color:#000;font-weight:bold;white-space:nowrap;width:107px;text-align:center;">Продано, 2кв.</div>
<div style="position:absolute;left:328px;top:249px;font-size:14.7px;line-height:17px;color:#000;font-weight:bold;white-space:nowrap;width:107px;text-align:center;">Шт.</div>
<div style="position:absolute;left:435.5px;top:269px;font-size:15px;line-height:17px;color:#000;font-weight:normal;white-space:nowrap;width:85px;text-align:right;">16</div>
<div style="position:absolute;left:434px;top:265px;width:90px;height:24px;border:2px solid #217346;"></div>
<div style="position:absolute;left:1056px;top:204px;width:21px;height:473px;background:#e6e6e6;"></div>
<div style="position:absolute;left:1059px;top:206px;width:15px;height:15px;background:#fff;border:1px solid #c6c6c6;"></div>
<svg style="left:1062px;top:211px;" width="9" height="5" viewBox="0 0 9 5"><path d="M0 5H9L4.5 0Z" fill="#666"/></svg>
<div style="position:absolute;left:1059px;top:221px;width:15px;height:420px;background:#fff;border:1px solid #b9b9b9;"></div>
<div style="position:absolute;left:1059px;top:641px;width:15px;height:22px;background:#e0e0e0;"></div>
<div style="position:absolute;left:1059px;top:663px;width:15px;height:15px;background:#fff;border:1px solid #c6c6c6;"></div>
<svg style="left:1062px;top:668px;" width="9" height="5" viewBox="0 0 9 5"><path d="M0 0H9L4.5 5Z" fill="#666"/></svg>
<div style="position:absolute;left:1px;top:677px;width:1076px;height:28px;background:#e6e6e6;border-top:1px solid #c6c6c6;"></div>
<svg style="left:27px;top:685px;" width="5" height="9" viewBox="0 0 5 9"><path d="M5 0V9L0 4.5Z" fill="#bcbcbc"/></svg>
<svg style="left:56px;top:685px;" width="5" height="9" viewBox="0 0 5 9"><path d="M0 0V9L5 4.5Z" fill="#bcbcbc"/></svg>
<div style="position:absolute;left:101px;top:677px;width:107px;height:25px;background:#fff;border-left:1px solid #c6c6c6;border-right:1px solid #c6c6c6;"></div>
<div style="position:absolute;left:101px;top:699px;width:107px;height:2px;background:#217346;"></div>
<div style="position:absolute;left:101px;top:683px;font-size:13px;line-height:15px;color:#217346;font-weight:bold;white-space:nowrap;width:107px;text-align:center;">microexcel.ru</div>
<svg style="left:241px;top:682px;" width="17" height="17" viewBox="0 0 17 17"><circle cx="8.5" cy="8.5" r="7.8" fill="none" stroke="#666" stroke-width="1.2"/><path d="M8.5 4.5V12.5M4.5 8.5H12.5" stroke="#666" stroke-width="1.6"/></svg>
<div style="position:absolute;left:647px;top:683px;width:2px;height:2px;background:#b4b4b4;"></div>
<div style="position:absolute;left:647px;top:688px;width:2px;height:2px;background:#b4b4b4;"></div>
<div style="position:absolute;left:647px;top:693px;width:2px;height:2px;background:#b4b4b4;"></div>
<div style="position:absolute;left:663px;top:684px;width:15px;height:15px;background:#fff;border:1px solid #c6c6c6;"></div>
<svg style="left:668px;top:687px;" width="5" height="9" viewBox="0 0 5 9"><path d="M5 0V9L0 4.5Z" fill="#444"/></svg>
<div style="position:absolute;left:677px;top:684px;width:327px;height:15px;background:#fff;border:1px solid #b9b9b9;"></div>
<div style="position:absolute;left:1004px;top:685px;width:38px;height:13px;background:#e0e0e0;"></div>
<div style="position:absolute;left:1042px;top:684px;width:16px;height:15px;background:#fff;border:1px solid #c6c6c6;"></div>
<svg style="left:1048px;top:687px;" width="5" height="9" viewBox="0 0 5 9"><path d="M0 0V9L5 4.5Z" fill="#444"/></svg>
<div style="position:absolute;left:1px;top:705px;width:1076px;height:22px;background:#f3f3f3;border-top:1px solid #d6d6d6;"></div>
<div style="position:absolute;left:9px;top:709px;font-size:12px;line-height:14px;color:#222;font-weight:normal;white-space:nowrap;">Готово</div>
<svg style="left:72px;top:708px;" width="14" height="14" viewBox="0 0 14 14"><circle cx="4" cy="3.5" r="3" fill="#555"/><path d="M6 4.5H13.5V13.5H1.5V7.5" fill="none" stroke="#555" stroke-width="1"/><path d="M3 9H12M3 11.5H12M6 7V13M9 7V13" stroke="#555" stroke-width="0.9"/></svg>
<div style="position:absolute;left:777px;top:706px;width:38px;height:21px;background:#c8c8c8;"></div>
<svg style="left:789px;top:709px;" width="14" height="14" viewBox="0 0 14 14"><path d="M0.5 0.5H13.5V13.5H0.5Z M0.5 4.8H13.5 M0.5 9.2H13.5 M4.8 0.5V13.5 M9.2 0.5V13.5" fill="none" stroke="#444" stroke-width="1"/></svg>
<svg style="left:827px;top:709px;" width="14" height="14" viewBox="0 0 14 14"><path d="M0.5 0.5H13.5V13.5H0.5Z M3.5 3.5H10.5V10.5H3.5Z M5 5.5H9 M5 7.5H9" fill="none" stroke="#444" stroke-width="1"/></svg>
<svg style="left:865px;top:709px;" width="14" height="14" viewBox="0 0 14 14"><path d="M0.5 13.5V0.5H13.5V13.5 M0.5 8.5H7.5V0.5 M0.5 13.5H13.5" fill="none" stroke="#444" stroke-width="1"/></svg>
<div style="position:absolute;left:896px;top:715px;width:7px;height:2px;background:#444;"></div>
<div style="position:absolute;left:906px;top:715px;width:100px;height:1px;background:#777;"></div>
<div style="position:absolute;left:953px;top:709px;width:6px;height:13px;background:#555;"></div>
<svg style="left:1008px;top:711px;" width="9" height="9" viewBox="0 0 9 9"><path d="M4.5 0V9M0 4.5H9" stroke="#444" stroke-width="1.6"/></svg>
<div style="position:absolute;left:1028px;top:709px;font-size:12px;line-height:14px;color:#222;font-weight:normal;white-space:nowrap;">100 %</div>
<svg style="left:505px;top:276px;" width="40" height="225" viewBox="0 0 40 225"><rect x="5.5" y="2.5" width="27" height="18" rx="8.5" fill="#fff" stroke="#f00" stroke-width="3"/><path d="M25 11.5H32" stroke="#d4d4d4" stroke-width="1"/><path d="M7 12H11" stroke="#217346" stroke-width="2"/>
<path d="M15.8 21H21.2V169H15.8Z" fill="#f00"/>
<path d="M1 158C8 160 13 164 16 169H21C24 164 30 160 35 158C32 166 25 190 18 220C12 190 5 166 1 158Z" fill="#f00"/>
<path d="M12 12H25M18.5 5.5V18.5" stroke="#000" stroke-width="3"/></svg>
<div style="position:absolute;left:1076px;top:64px;width:1px;height:664px;background:rgba(0,115,61,0.55);"></div>
</body></html>
